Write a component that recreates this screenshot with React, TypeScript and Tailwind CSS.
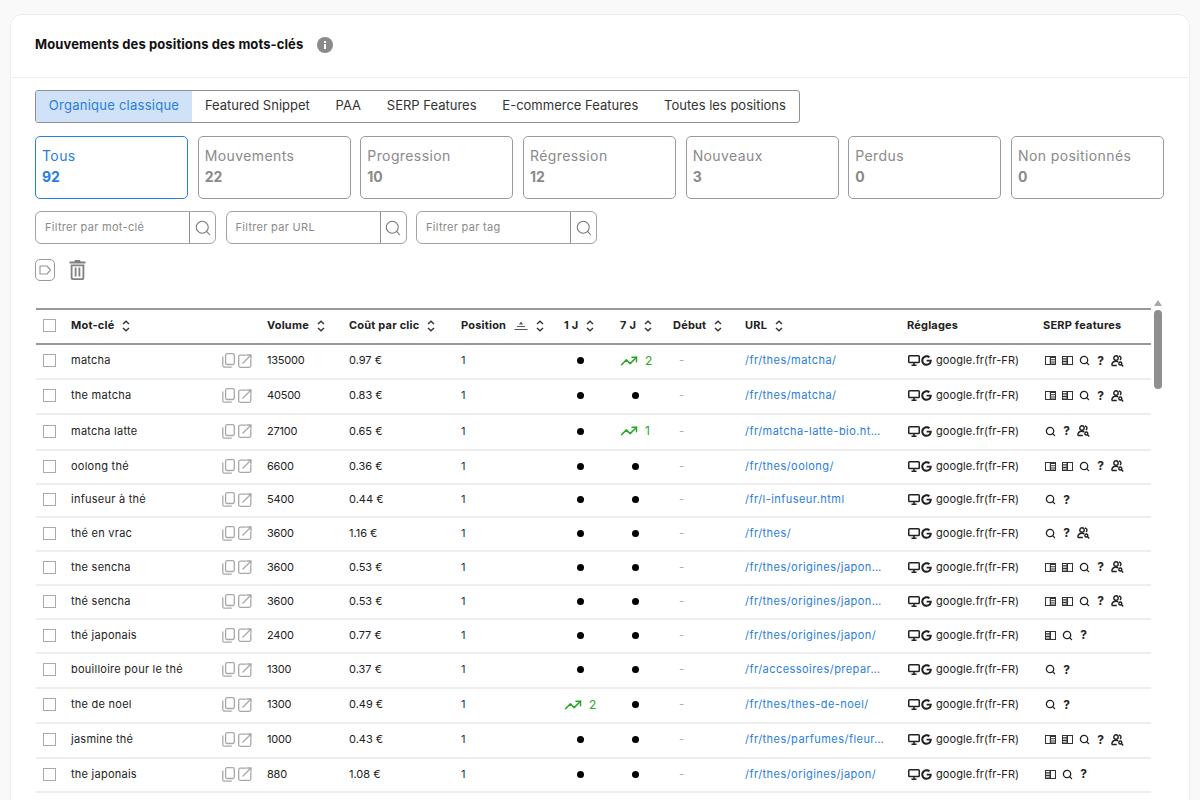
import { Search, TrendingUp } from "lucide-react";
import { FaGoogle } from "react-icons/fa";

const tabs = ["Organique classique", "Featured Snippet", "PAA", "SERP Features", "E-commerce Features", "Toutes les positions"];

const stats = [
  { label: "Tous", value: 92 },
  { label: "Mouvements", value: 22 },
  { label: "Progression", value: 10 },
  { label: "Régression", value: 12 },
  { label: "Nouveaux", value: 3 },
  { label: "Perdus", value: 0 },
  { label: "Non positionnés", value: 0 },
];

const filters = ["Filtrer par mot-clé", "Filtrer par URL", "Filtrer par tag"];

const columns = [
  { label: "Volume", width: "w-[82px]" },
  { label: "Coût par clic", width: "w-[112px]" },
  { label: "Position", width: "w-[103px]", sorted: true },
  { label: "1 J", width: "w-[56px]" },
  { label: "7 J", width: "w-[53px]" },
  { label: "Début", width: "w-[72px]" },
  { label: "URL", width: "w-[162px]" },
];

type Row = {
  keyword: string;
  volume: number;
  cpc: string;
  day?: number;
  week?: number;
  url: string;
  serp: string[];
  height: string;
};

const full = ["book", "bookAlt", "search", "help", "people"];
const spp = ["search", "help", "people"];
const sp = ["search", "help"];
const bsp = ["bookAlt", "search", "help"];

const rows: Row[] = [
  { keyword: "matcha", volume: 135000, cpc: "0.97 €", week: 2, url: "/fr/thes/matcha/", serp: full, height: "h-[35px]" },
  { keyword: "the matcha", volume: 40500, cpc: "0.83 €", url: "/fr/thes/matcha/", serp: full, height: "h-[35px]" },
  { keyword: "matcha latte", volume: 27100, cpc: "0.65 €", week: 1, url: "/fr/matcha-latte-bio.ht…", serp: spp, height: "h-[36px]" },
  { keyword: "oolong thé", volume: 6600, cpc: "0.36 €", url: "/fr/thes/oolong/", serp: full, height: "h-[34px]" },
  { keyword: "infuseur à thé", volume: 5400, cpc: "0.44 €", url: "/fr/l-infuseur.html", serp: sp, height: "h-[33px]" },
  { keyword: "thé en vrac", volume: 3600, cpc: "1.16 €", url: "/fr/thes/", serp: spp, height: "h-[34px]" },
  { keyword: "the sencha", volume: 3600, cpc: "0.53 €", url: "/fr/thes/origines/japon…", serp: full, height: "h-[34px]" },
  { keyword: "thé sencha", volume: 3600, cpc: "0.53 €", url: "/fr/thes/origines/japon…", serp: full, height: "h-[34px]" },
  { keyword: "thé japonais", volume: 2400, cpc: "0.77 €", url: "/fr/thes/origines/japon/", serp: bsp, height: "h-[34px]" },
  { keyword: "bouilloire pour le thé", volume: 1300, cpc: "0.37 €", url: "/fr/accessoires/prepar…", serp: sp, height: "h-[35px]" },
  { keyword: "the de noel", volume: 1300, cpc: "0.49 €", day: 2, url: "/fr/thes/thes-de-noel/", serp: sp, height: "h-[35px]" },
  { keyword: "jasmine thé", volume: 1000, cpc: "0.43 €", url: "/fr/thes/parfumes/fleur…", serp: full, height: "h-[35px]" },
  { keyword: "the japonais", volume: 880, cpc: "1.08 €", url: "/fr/thes/origines/japon/", serp: bsp, height: "h-[34px]" },
];

function SortIcon() {
  return (
    <svg viewBox="0 0 8 12" className="h-[12px] w-[8px] text-[#333]" fill="none" stroke="currentColor" strokeWidth="1.4">
      <path d="M1 4 4 1.2 7 4M1 8l3 2.8L7 8" />
    </svg>
  );
}

function PositionSortIcon() {
  return (
    <svg viewBox="0 0 14 10" className="h-[10px] w-[14px] text-[#555]" fill="currentColor">
      <path d="M7 0.5 9 3.500H5z" />
      <rect x="3" y="5" width="8" height="1" />
      <rect x="0.5" y="8" width="13" height="1" />
    </svg>
  );
}

function InfoIcon() {
  return (
    <svg viewBox="0 0 16 16" className="h-[16px] w-[16px]">
      <circle cx="8" cy="8" r="8" fill="#8a8a8a" />
      <rect x="7" y="7" width="2" height="5" fill="#fff" />
      <rect x="7" y="4" width="2" height="2" fill="#fff" />
    </svg>
  );
}

function TagIcon() {
  return (
    <svg viewBox="0 0 20 22" className="h-[22px] w-[20px]" fill="none" stroke="#9a9a9a" strokeWidth="1">
      <rect x="0.5" y="0.5" width="19" height="21" rx="4.5" />
      <path d="M5 7h7l3.500 4-3.500 4H5z" strokeWidth="1.2" strokeLinejoin="round" />
    </svg>
  );
}

function TrashIcon() {
  return (
    <svg viewBox="0 0 16 20" className="h-[20px] w-[17px]" fill="#808080">
      <path d="M5.500 0h5l.6 1.400H16V3.400H0V1.400h4.900z" />
      <path fillRule="evenodd" d="M1.200 4.500h13.600V18a2 2 0 0 1-2 2H3.200a2 2 0 0 1-2-2zM3 6.300V17.200c0 .6.400 1 1 1h8c.6 0 1-.4 1-1V6.300z" />
      <rect x="5.200" y="7.500" width="1.800" height="9" />
      <rect x="9" y="7.500" width="1.800" height="9" />
    </svg>
  );
}

function CopyIcon() {
  return (
    <svg viewBox="0 0 13 15" className="h-[15px] w-[13px]" fill="none" stroke="#a8a8a8" strokeWidth="1.300">
      <rect x="3.600" y="0.700" width="8.700" height="10.800" rx="1.500" />
      <path d="M0.800 3.500v9.200c0 .9.500 1.500 1.500 1.500h7.500" />
    </svg>
  );
}

function OpenIcon() {
  return (
    <svg viewBox="0 0 14 14" className="h-[14px] w-[14px]" fill="none" stroke="#a8a8a8" strokeWidth="1.300">
      <path d="M8.500 1.200H2.200C1.300 1.200.7 1.800.7 2.700v9.100c0 .9.600 1.500 1.500 1.500h9.100c.9 0 1.500-.6 1.500-1.500V5.500" />
      <path d="M4.500 9.500 12.800 1.200M8.800 1h4.200v4.200" />
    </svg>
  );
}

function MonitorIcon() {
  return (
    <svg viewBox="0 0 12 11" className="h-[11px] w-[12px]" fill="none" stroke="#222" strokeWidth="1.500">
      <rect x="0.750" y="0.750" width="10.500" height="6.800" rx="0.800" />
      <path d="M6 7.500v2.800M3.500 10.300h5" />
    </svg>
  );
}

function SerpIcon({ name }: { name: string }) {
  if (name === "book") {
    return (
      <svg viewBox="0 0 11 9" className="h-[9px] w-[11px]" fill="#333">
        <path fillRule="evenodd" d="M0 0h11v9H0zm1 1v7h3.800V1zm5 1v1.200h4V2zm0 2.300v1.200h4V4.300zm0 2.200v1.100h4V6.500z" />
      </svg>
    );
  }
  if (name === "bookAlt") {
    return (
      <svg viewBox="0 0 11 9" className="h-[9px] w-[11px]" fill="#333">
        <path fillRule="evenodd" d="M0 0h11v9H0zm1 1v1.200h3.500V1zm0 2.600v1.200h3.500V3.600zM1 6.200v1.300h3.500V6.200zM6 1v7h4V1z" />
      </svg>
    );
  }
  if (name === "search") {
    return <Search className="h-[11px] w-[11px] text-[#222]" strokeWidth={2.8} />;
  }
  if (name === "help") {
    return <span className="w-[9px] text-center text-[12px] leading-none font-bold text-[#222]">?</span>;
  }
  return (
    <svg viewBox="0 0 13 12" className="h-[12px] w-[13px]" fill="none" stroke="#222" strokeWidth="1.400">
      <circle cx="5" cy="3" r="2.200" />
      <path d="M0.800 10.500c0-2.800 1.800-4.200 4.200-4.200 1 0 1.700.2 2.200.6M0.800 10.500h5" />
      <path d="M8 1c1.300.2 2 1 2 2s-.4 1.600-1 2" />
      <circle cx="9.300" cy="8.500" r="1.500" />
      <path d="m10.400 9.600 1.800 1.800" />
    </svg>
  );
}

function Trend({ value }: { value: number }) {
  return (
    <span className="flex items-center gap-[7px] text-[12px] text-[#2aa52a]">
      <TrendingUp className="h-[18px] w-[18px]" strokeWidth={2} />
      {value}
    </span>
  );
}

function Dot() {
  return <span className="block h-[7px] w-[7px] rounded-full bg-black" />;
}

export default function App() {
  return (
    <div className="h-screen overflow-hidden bg-[#f9f9f9] px-[10px] pt-[14px] font-['Inter','Liberation_Sans',sans-serif] text-[#222]">
      <div className="h-[900px] rounded-t-xl border border-[#eeeeee] bg-white">
        <div className="flex h-[63px] items-center gap-[14px] border-b border-[#eeeeee] pb-[2px] pl-[24px]">
          <h1 className="text-[13px] font-bold tracking-[0.1px] text-[#111]">Mouvements des positions des mots-clés</h1>
          <InfoIcon />
        </div>

        <div className="pt-[12px] pl-[24px]">
          <div className="flex h-[33px] w-fit items-center overflow-hidden rounded-[3px] border border-[#8f8f8f] pb-px text-[13px]">
            {tabs.map((tab, i) => (
              <div
                key={tab}
                className={
                  i === 0
                    ? "-mb-px flex h-[33px] w-[156px] items-center justify-center bg-[#cfe2f7] pb-px tracking-[0.25px] text-[#2a7de1]"
                    : "flex h-full items-center px-[12.900px] text-[#333]"
                }
              >
                {tab}
              </div>
            ))}
          </div>

          <div className="mt-[13px] flex gap-[9.670px]">
            {stats.map((stat, i) => (
              <div
                key={stat.label}
                className={
                  i === 0
                    ? "h-[63px] w-[153px] rounded-[5px] border border-[#2a7de1] px-[6px] pt-[10px] text-[#2a7de1]"
                    : "h-[63px] w-[153px] rounded-[5px] border border-[#9a9a9a] px-[6px] pt-[10px] text-[#8a8a8a]"
                }
              >
                <div className="text-[14px] leading-[18px] tracking-[0.4px]">{stat.label}</div>
                <div className="mt-[3px] text-[14px] leading-[18px] font-bold">{stat.value}</div>
              </div>
            ))}
          </div>

          <div className="mt-[12px] flex gap-[9.500px]">
            {filters.map((filter) => (
              <div key={filter} className="flex h-[33px] w-[181px] overflow-hidden rounded-[6px] border border-[#a3a3a3]">
                <div className="flex flex-1 items-center pl-[9px] text-[11px] tracking-[0.3px] text-[#8a8a8a]">{filter}</div>
                <div className="flex w-[26px] items-center justify-center border-l border-[#8f8f8f]">
                  <Search className="h-[18px] w-[18px] text-[#777]" strokeWidth={1.4} />
                </div>
              </div>
            ))}
          </div>

          <div className="mt-[15px] flex items-center gap-[14px]">
            <TagIcon />
            <TrashIcon />
          </div>

          <div className="mt-[27px] flex">
            <table className="ml-px w-[1115px] table-fixed border-collapse text-[11px]">
              <thead>
                <tr className="h-[35px] border-y-2 border-[#999999] pb-px text-left font-bold tracking-[0.2px] [&>th]:pb-[2px]">
                  <th className="w-[35px] pl-[7px] font-normal">
                    <span className="block h-[13px] w-[13px] border border-[#aaaaaa]" />
                  </th>
                  <th className="w-[151px]">
                    <span className="flex items-center gap-[8px]">
                      Mot-clé <SortIcon />
                    </span>
                  </th>
                  <th className="w-[45px]" />
                  {columns.map((col) => (
                    <th key={col.label} className={col.width}>
                      <span className="flex items-center gap-[8px] whitespace-nowrap">
                        {col.label}
                        {col.sorted && <PositionSortIcon />}
                        <SortIcon />
                      </span>
                    </th>
                  ))}
                  <th className="w-[136px]">Réglages</th>
                  <th className="w-[108px]">SERP features</th>
                </tr>
              </thead>
              <tbody>
                {rows.map((row) => (
                  <tr key={row.keyword} className={`${row.height} border-b-2 border-[#eeeeee] [&>td]:pb-[2px]`}>
                    <td className="pl-[7px]">
                      <span className="block h-[13px] w-[13px] border border-[#aaaaaa]" />
                    </td>
                    <td className="whitespace-nowrap tracking-[0.25px]">{row.keyword}</td>
                    <td>
                      <span className="flex items-center gap-[3px]">
                        <CopyIcon />
                        <OpenIcon />
                      </span>
                    </td>
                    <td className="tracking-[-0.2px]">{row.volume}</td>
                    <td>{row.cpc}</td>
                    <td className="text-[#1f2f4f]">1</td>
                    <td>
                      {row.day ? <Trend value={row.day} /> : <span className="ml-[13px] block w-fit"><Dot /></span>}
                    </td>
                    <td>
                      {row.week ? <Trend value={row.week} /> : <span className="ml-[12px] block w-fit"><Dot /></span>}
                    </td>
                    <td className="pl-[6px] text-[#aaaaaa]">-</td>
                    <td className="whitespace-nowrap tracking-[0.45px] text-[#2a7de1]">{row.url}</td>
                    <td>
                      <span className="flex items-center gap-[1px] whitespace-nowrap pl-px">
                        <MonitorIcon />
                        <FaGoogle className="h-[11px] w-[11px] text-[#222]" />
                        <span className="ml-[3px] tracking-[0.1px]">google.fr(fr-FR)</span>
                      </span>
                    </td>
                    <td>
                      <span className="ml-[2px] flex items-center gap-[6px]">
                        {row.serp.map((icon, i) => (
                          <SerpIcon key={i} name={icon} />
                        ))}
                      </span>
                    </td>
                  </tr>
                ))}
              </tbody>
            </table>

            <div className="-mt-[8px] ml-[2px] flex w-[9px] flex-col items-center">
              <span className="h-0 w-0 border-x-[4px] border-b-[6px] border-x-transparent border-b-[#a8a8a8]" />
              <span className="mt-[4px] h-[79px] w-[8px] rounded-full bg-[#8f8f8f]" />
            </div>
          </div>
        </div>
      </div>
    </div>
  );
}
